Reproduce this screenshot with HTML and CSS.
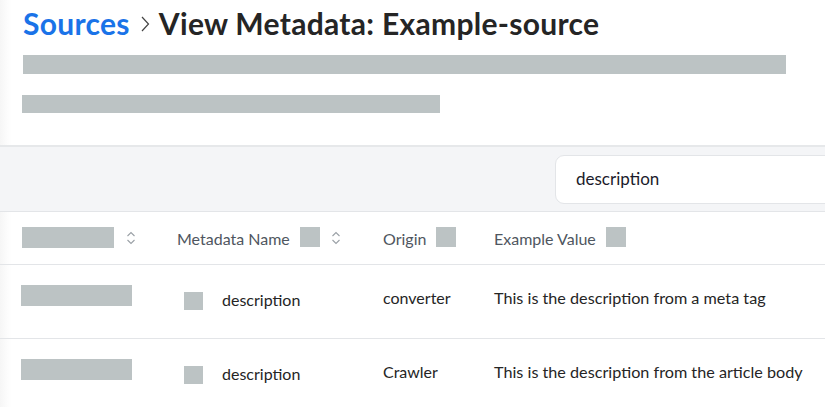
FILE: index.html
```html
<!DOCTYPE html>
<html lang="en">
<head>
<meta charset="utf-8">
<title>View Metadata</title>
<link rel="stylesheet" href="styles.css">
</head>
<body>
<div class="page">
  <header class="head">
    <h1 class="title"><span class="crumb">Sources</span><svg class="chev" width="12" height="18" viewBox="0 0 12 18"><path d="M3 2 L9.5 9 L3 16" fill="none" stroke="#444" stroke-width="1.2"/></svg><span>View Metadata: Example-source</span></h1>
    <div class="bar bar1"></div>
    <div class="bar bar2"></div>
  </header>
  <div class="toolbar">
    <div class="search">description</div>
  </div>
  <div class="table">
    <div class="row thead">
      <div class="cell c1"><span class="blk hblk"></span><svg class="sort" width="10" height="14" viewBox="0 0 10 14"><path d="M1.5 5 L5 1.5 L8.5 5 M1.5 9 L5 12.5 L8.5 9" fill="none" stroke="#9aa0a6" stroke-width="1.1"/></svg></div>
      <div class="cell c2"><span class="htext">Metadata Name</span><span class="sq"></span><svg class="sort" width="10" height="14" viewBox="0 0 10 14"><path d="M1.5 5 L5 1.5 L8.5 5 M1.5 9 L5 12.5 L8.5 9" fill="none" stroke="#9aa0a6" stroke-width="1.1"/></svg></div>
      <div class="cell c3"><span class="htext">Origin</span><span class="sq"></span></div>
      <div class="cell c4"><span class="htext">Example Value</span><span class="sq"></span></div>
    </div>
    <div class="row trow">
      <div class="cell c1"><span class="blk rblk"></span></div>
      <div class="cell c2 name"><span class="sq rsq"></span><span class="txt">description</span></div>
      <div class="cell c3"><span class="txt">converter</span></div>
      <div class="cell c4"><span class="txt">This is the description from a meta tag</span></div>
    </div>
    <div class="row trow">
      <div class="cell c1"><span class="blk rblk"></span></div>
      <div class="cell c2 name"><span class="sq rsq"></span><span class="txt">description</span></div>
      <div class="cell c3"><span class="txt">Crawler</span></div>
      <div class="cell c4"><span class="txt">This is the description from the article body</span></div>
    </div>
  </div>
</div>
</body>
</html>
```

FILE: styles.css
```css
* { box-sizing: border-box; }
html, body { margin: 0; padding: 0; }
body {
  font-family: Lato, "Noto Sans", sans-serif;
  background: linear-gradient(to right, #f6f6f6 0, #fdfdfd 8px, #ffffff 12px);
  color: #222;
  width: 825px;
  height: 407px;
  overflow: hidden;
}
.page { width: 825px; }
.head { padding-top: 6px; height: 145px; }
.title {
  margin: 0 0 0 23px;
  font-size: 30px;
  letter-spacing: 0.3px;
  line-height: 35px;
  font-weight: 700;
  color: #252525;
  display: flex;
  align-items: center;
  white-space: nowrap;
}
.crumb { color: #1a73e8; }
.chev { margin: 0 8px 0 9px; }
.bar { background: #bcc3c4; }
.bar1 { margin: 14px 0 0 23px; width: 763px; height: 19px; }
.bar2 { margin: 21px 0 0 22px; width: 418px; height: 18px; }
.toolbar {
  border-top: 2px solid #e6e8ea;
  border-bottom: 1px solid #e3e5e8;
  background: #f4f5f7;
  height: 67px;
  padding: 8px 0 0 555px;
}
.search {
  width: 290px;
  height: 49px;
  background: #fff;
  border: 1px solid #e3e5e8;
  border-radius: 9px;
  padding: 0 0 3px 20px;
  display: flex;
  align-items: center;
  font-size: 17px;
  color: #1b1b2b;
}
.row {
  display: grid;
  grid-template-columns: 177px 206px 111px 1fr;
  border-bottom: 1px solid #e3e5e8;
}
.thead { height: 53px; }
.trow { height: 74px; }
.cell {
  display: flex;
  white-space: nowrap;
  font-size: 16px;
  color: #252525;
}
.thead .cell { align-items: center; }
.trow .cell { align-items: flex-start; }
.c1 { padding-left: 22px; }
.blk { display: block; background: #bcc3c4; }
.hblk { width: 92px; height: 21px; margin-top: -2px; }
.rblk { width: 111px; height: 21px; margin: 20px 0 0 -1px; }
.sort { margin-left: 12px; }
.htext { font-size: 16px; color: #4f5660; }
.sq { display: block; width: 20px; height: 20px; background: #bcc3c4; margin-left: 10px; margin-top: -2px; }
.c2 .sq + .sort { margin-left: 11px; }
.name { padding-left: 7px; }
.rsq { margin: 27px 19px 0 0; width: 19px; height: 18px; }
.txt { display: block; line-height: 20px; margin-top: 23px; }
.name .txt { margin-top: 25px; }
.c4 .txt { font-size: 16.2px; }
```
